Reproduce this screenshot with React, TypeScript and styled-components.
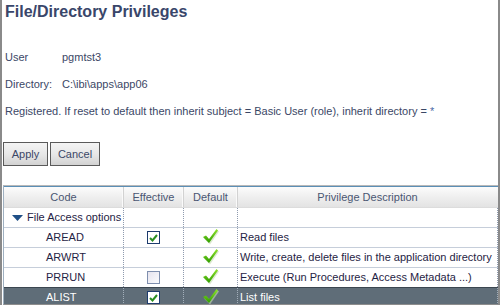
import * as React from 'react';
import styled, { createGlobalStyle } from 'styled-components';

const GlobalStyle = createGlobalStyle`
    html, body {
        margin: 0;
        padding: 0;
        background: #fff;
    }
    body {
        font-family: "Liberation Sans", Arial, sans-serif;
        font-size: 11px;
    }
`;

const Frame = styled.div`
    width: 500px;
    height: 305px;
    box-sizing: border-box;
    border-left: 2px solid #8a8a8a;
    border-right: 2px solid #8a8a8a;
    overflow: hidden;
    display: flex;
    flex-direction: column;
`;

const Title = styled.h1`
    margin: 0;
    padding-left: 3px;
    height: 24px;
    line-height: 24px;
    font-size: 16px;
    font-weight: bold;
    color: #39466a;
`;

const Info = styled.div`
    margin-top: 20px;
    padding-left: 3px;
    color: #3b4766;
`;

const InfoRow = styled.div`
    display: grid;
    grid-template-columns: 57px auto;
    height: 27px;
    line-height: 27px;
    white-space: nowrap;
`;

const Note = styled.div`
    height: 27px;
    line-height: 27px;
    white-space: nowrap;
`;

const Star = styled.span`
    color: #4d6aa6;
`;

const Toolbar = styled.div`
    display: flex;
    gap: 2px;
    margin: 17px 0 0 1px;
`;

const Button = styled.button<{ w: number }>`
    width: ${p => p.w}px;
    height: 24px;
    padding: 0;
    box-sizing: border-box;
    border: 1px solid #5a5a5a;
    background: linear-gradient(#f4f4f4, #e6e6e6 55%, #d2d2d2);
    color: #3b4766;
    font-family: inherit;
    font-size: 11px;
`;

const Grid = styled.div`
    margin: 19px 0 0 1px;
    width: 495px;
    box-sizing: border-box;
    border-top: 1px solid #b9b9b9;
    border-left: 1px solid #9fb0c0;
    border-bottom: 1px solid #8d8d8d;
    flex: 1;
    overflow: hidden;
`;

const columns = '120px 60px 54px 260px';

const HeaderRow = styled.div`
    display: grid;
    grid-template-columns: ${columns};
    height: 21px;
    box-sizing: border-box;
    border-top: 1px solid #5b8fb6;
    background: linear-gradient(#fcfcfc, #f0f0f0 45%, #e3e3e3);
`;

const HeaderCell = styled.div<{ last?: boolean }>`
    box-sizing: border-box;
    border-right: 1px solid ${p => (p.last ? 'transparent' : '#d2d2d2')};
    box-shadow: ${p => (p.last ? 'none' : 'inset -1px 0 #fafafa')};
    text-align: center;
    line-height: 20px;
    color: #4a5672;
`;

const Row = styled.div<{ selected?: boolean; first?: boolean }>`
    display: grid;
    grid-template-columns: ${columns};
    height: 20px;
    box-sizing: border-box;
    border-top: 1px solid ${p => (p.selected ? '#3b4650' : p.first ? '#dcdcdc' : '#c6ceda')};
    background: ${p => (p.selected ? '#5f6d78' : '#fff')};
    color: ${p => (p.selected ? '#fff' : '#1f2344')};
`;

const Cell = styled.div<{ selected?: boolean; pad?: number; center?: boolean }>`
    box-sizing: border-box;
    border-right: 1px dotted ${p => (p.selected ? '#a3afba' : '#8e9aae')};
    padding-left: ${p => p.pad ?? 0}px;
    line-height: 19px;
    white-space: nowrap;
    overflow: hidden;
    display: flex;
    align-items: center;
    justify-content: ${p => (p.center ? 'center' : 'flex-start')};
`;

const Group = styled.span`
    display: flex;
    align-items: center;
    gap: 4px;
`;

const Box = styled.span<{ checked: boolean }>`
    width: 13px;
    height: 13px;
    box-sizing: border-box;
    border: 1px solid ${p => (p.checked ? '#1d3b6d' : '#7f8fae')};
    background: ${p => (p.checked ? '#fff' : 'linear-gradient(135deg, #e6e4ee, #fbfbfd)')};
    display: flex;
    align-items: center;
    justify-content: center;
`;

const Arrow = () => (
    <svg width="11" height="6" viewBox="0 0 11 6">
        <polygon points="0,0 11,0 5.5,6" fill="#1f4f86" />
    </svg>
);

const SmallCheck = () => (
    <svg width="9" height="8" viewBox="0 0 9 8">
        <polyline points="1,4 3.5,6.5 8,1" fill="none" stroke="#2b8f22" strokeWidth="2" />
    </svg>
);

const BigCheck = () => (
    <svg width="18" height="17" viewBox="0 0 18 17">
        <defs>
            <linearGradient id="ck" x1="0" y1="0" x2="0" y2="1">
                <stop offset="0" stopColor="#8ee42a" />
                <stop offset="1" stopColor="#2f9c00" />
            </linearGradient>
        </defs>
        <polygon points="2,9.5 5,8 8,11.5 15.5,1 17,2.5 8,15.5" fill="#c4dcb0" opacity="0.6" />
        <polygon points="1,8 4,6.5 7,10 14.5,0 16,1.5 7,14" fill="url(#ck)" />
    </svg>
);

interface Privilege {
    code: string;
    effective: boolean | null;
    description: string;
}

const privileges: Privilege[] = [
    { code: 'AREAD', effective: true, description: 'Read files' },
    { code: 'ARWRT', effective: null, description: 'Write, create, delete files in the application directory' },
    { code: 'PRRUN', effective: false, description: 'Execute (Run Procedures, Access Metadata ...)' },
    { code: 'ALIST', effective: true, description: 'List files' },
];

export default function App() {
    const selected = 'ALIST';

    return (
        <>
            <GlobalStyle />
            <Frame>
                <Title>File/Directory Privileges</Title>
                <Info>
                    <InfoRow>
                        <span>User</span>
                        <span>pgmtst3</span>
                    </InfoRow>
                    <InfoRow>
                        <span>Directory:</span>
                        <span>C:\ibi\apps\app06</span>
                    </InfoRow>
                    <Note>
                        Registered. If reset to default then inherit subject = Basic User (role), inherit directory = <Star>*</Star>
                    </Note>
                </Info>
                <Toolbar>
                    <Button w={45}>Apply</Button>
                    <Button w={50}>Cancel</Button>
                </Toolbar>
                <Grid>
                    <HeaderRow>
                        <HeaderCell>Code</HeaderCell>
                        <HeaderCell>Effective</HeaderCell>
                        <HeaderCell>Default</HeaderCell>
                        <HeaderCell last>Privilege Description</HeaderCell>
                    </HeaderRow>
                    <Row first>
                        <Cell pad={8}>
                            <Group>
                                <Arrow />
                                File Access options
                            </Group>
                        </Cell>
                        <Cell />
                        <Cell />
                        <Cell />
                    </Row>
                    {privileges.map(p => {
                        const sel = p.code === selected;
                        return (
                            <Row key={p.code} selected={sel}>
                                <Cell selected={sel} pad={42}>{p.code}</Cell>
                                <Cell selected={sel} center>
                                    {p.effective !== null && (
                                        <Box checked={p.effective}>{p.effective && <SmallCheck />}</Box>
                                    )}
                                </Cell>
                                <Cell selected={sel} center>
                                    <BigCheck />
                                </Cell>
                                <Cell selected={sel} pad={2}>{p.description}</Cell>
                            </Row>
                        );
                    })}
                </Grid>
            </Frame>
        </>
    );
}
